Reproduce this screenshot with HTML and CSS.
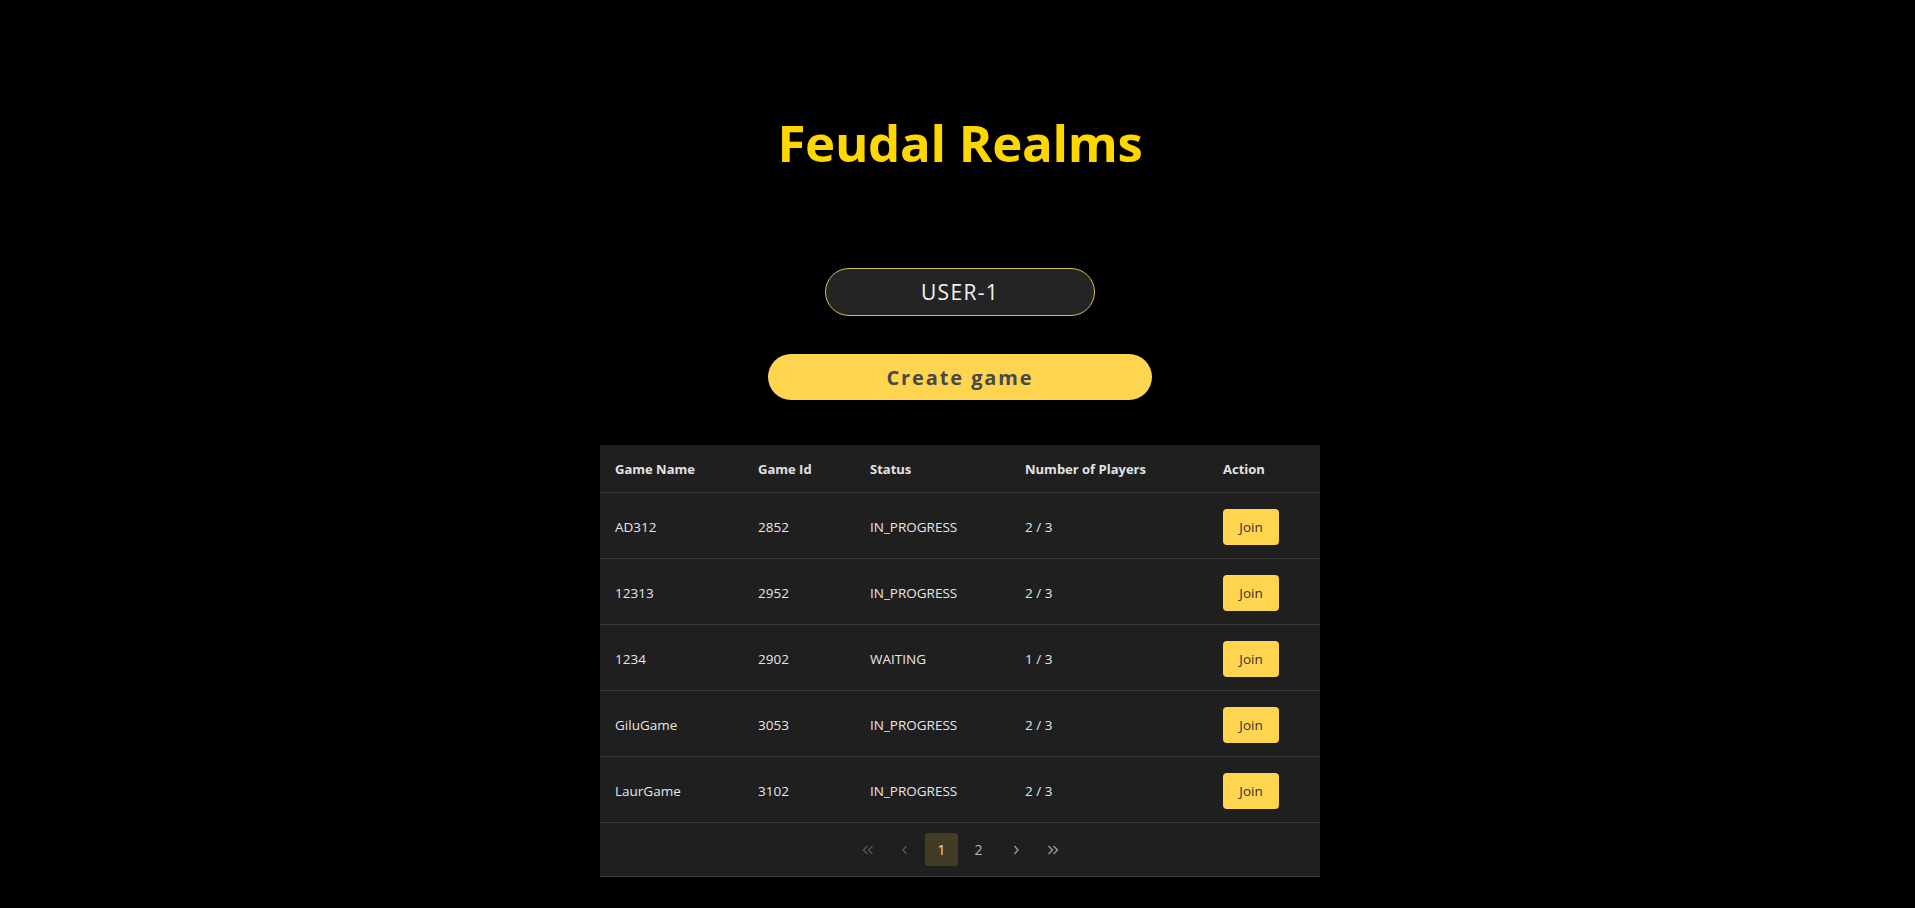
FILE: index.html
```html
<!DOCTYPE html>
<html lang="en">
<head>
<meta charset="utf-8">
<title>Feudal Realms</title>
<link rel="stylesheet" href="styles.css">
</head>
<body>
<main class="page">
  <h1 class="title">Feudal Realms</h1>
  <input class="name-input" type="text" value="USER-1">
  <button class="create-btn" type="button">Create game</button>
  <div class="games">
    <table class="games-table">
      <colgroup>
        <col class="c-name"><col class="c-id"><col class="c-status"><col class="c-players"><col class="c-action">
      </colgroup>
      <thead>
        <tr><th>Game Name</th><th>Game Id</th><th>Status</th><th>Number of Players</th><th>Action</th></tr>
      </thead>
      <tbody>
        <tr><td>AD312</td><td>2852</td><td>IN_PROGRESS</td><td>2 / 3</td><td><button class="join-btn" type="button">Join</button></td></tr>
        <tr><td>12313</td><td>2952</td><td>IN_PROGRESS</td><td>2 / 3</td><td><button class="join-btn" type="button">Join</button></td></tr>
        <tr><td>1234</td><td>2902</td><td>WAITING</td><td>1 / 3</td><td><button class="join-btn" type="button">Join</button></td></tr>
        <tr><td>GiluGame</td><td>3053</td><td>IN_PROGRESS</td><td>2 / 3</td><td><button class="join-btn" type="button">Join</button></td></tr>
        <tr><td>LaurGame</td><td>3102</td><td>IN_PROGRESS</td><td>2 / 3</td><td><button class="join-btn" type="button">Join</button></td></tr>
      </tbody>
    </table>
    <nav class="pager">
      <span class="pg disabled"><svg width="12" height="10" viewBox="0 0 12 10"><path d="M5.5 1 L1.5 5 L5.5 9 M10.5 1 L6.5 5 L10.5 9" fill="none" stroke="currentColor" stroke-width="1.4"/></svg></span>
      <span class="pg disabled"><svg width="6" height="10" viewBox="0 0 6 10"><path d="M4.5 1 L1 5 L4.5 9" fill="none" stroke="currentColor" stroke-width="1.4"/></svg></span>
      <span class="pg active">1</span>
      <span class="pg num">2</span>
      <span class="pg"><svg width="6" height="10" viewBox="0 0 6 10"><path d="M1.5 1 L5 5 L1.5 9" fill="none" stroke="currentColor" stroke-width="1.4"/></svg></span>
      <span class="pg"><svg width="12" height="10" viewBox="0 0 12 10"><path d="M1.5 1 L5.5 5 L1.5 9 M6.5 1 L10.5 5 L6.5 9" fill="none" stroke="currentColor" stroke-width="1.4"/></svg></span>
    </nav>
  </div>
</main>
</body>
</html>
```
FILE: styles.css
```css
html, body {
  margin: 0;
  padding: 0;
  background: #000;
}
body {
  font-family: "Open Sans", "Noto Sans", "DejaVu Sans", sans-serif;
  color: #ddd;
  overflow: hidden;
}
.page {
  display: flex;
  flex-direction: column;
  align-items: center;
  padding-top: 109px;
  padding-left: 5px;
}
.title {
  margin: 0;
  font-size: 51px;
  line-height: 67px;
  font-weight: 700;
  color: #ffd700;
  letter-spacing: -0.3px;
}
.name-input {
  box-sizing: border-box;
  margin-top: 92px;
  width: 270px;
  height: 48px;
  border: 1px solid #d9bb55;
  border-radius: 24px;
  background: #242424;
  color: #f2f2f2;
  font-family: inherit;
  font-size: 21px;
  text-align: center;
  letter-spacing: 1.3px;
  outline: none;
}
.create-btn {
  box-sizing: border-box;
  margin-top: 38px;
  width: 384px;
  height: 46px;
  border: none;
  border-radius: 23px;
  background: #ffd54f;
  color: #484848;
  font-family: inherit;
  font-size: 20px;
  font-weight: 700;
  letter-spacing: 1.9px;
  padding: 0;
}
.games {
  margin-top: 45px;
  width: 720px;
  background: #1f1f1f;
  border-bottom: 1px solid #3a3a3a;
}
.games-table {
  width: 100%;
  border-collapse: collapse;
  table-layout: fixed;
  font-size: 13px;
}
.c-name { width: 143px; }
.c-id { width: 112px; }
.c-status { width: 155px; }
.c-players { width: 198px; }
.c-action { width: 112px; }
.games-table th {
  height: 47px;
  padding: 0 0 0 15px;
  text-align: left;
  font-weight: 700;
  color: #e2e2e2;
  border-bottom: 1px solid #3a3a3a;
}
.games-table td {
  height: 63px;
  padding: 2px 0 0 15px;
  font-size: 13.5px;
  color: #e6e6e6;
  border-bottom: 1px solid #3a3a3a;
}
.join-btn {
  width: 56px;
  height: 36px;
  border: none;
  border-radius: 4px;
  background: #ffd54f;
  color: #333;
  font-family: inherit;
  font-size: 13.5px;
  padding: 0;
}
.pager {
  display: flex;
  justify-content: center;
  align-items: center;
  gap: 4px;
  height: 53px;
}
.pg {
  width: 33px;
  height: 33px;
  display: flex;
  align-items: center;
  justify-content: center;
  font-size: 14px;
  color: #9a9a9a;
  border-radius: 3px;
}
.pg.disabled { color: #555; }
.pg.active { background: #433b25; color: #eedfae; }
.pg.num { color: #b5b5b5; }
```
